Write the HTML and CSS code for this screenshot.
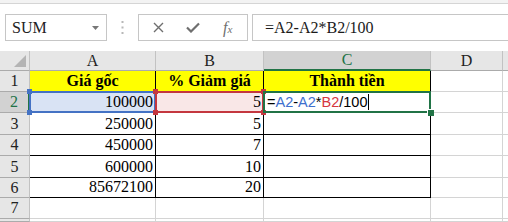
FILE: index.html
```html
<!DOCTYPE html>
<html lang="vi">
<head>
  <meta charset="UTF-8">
  <title>Bảng tính</title>
  <link rel="stylesheet" href="styles.css">
</head>
<body>

  <div class="ribbon-edge"></div>

  <!-- formula bar -->
  <div class="toolbar">
    <div class="name-box">
      <span>SUM</span>
      <svg class="drop" width="7" height="4" viewBox="0 0 7 4"><path d="M0 0h7L3.5 4z" fill="#777"/></svg>
    </div>
    <div class="grip">
      <svg width="3" height="13" viewBox="0 0 3 13"><rect x="0.5" y="0" width="2" height="2" fill="#b8b8b8"/><rect x="0.5" y="5.5" width="2" height="2" fill="#b8b8b8"/><rect x="0.5" y="11" width="2" height="2" fill="#b8b8b8"/></svg>
    </div>
    <div class="fx-box">
      <svg class="ico" width="11" height="11" viewBox="0 0 11 11"><path d="M1 1l9 9M10 1l-9 9" stroke="#6f6f6f" stroke-width="1.4" fill="none"/></svg>
      <svg class="ico" width="14" height="11" viewBox="0 0 14 11"><path d="M1 5.5l4 4L13 1.5" stroke="#6f6f6f" stroke-width="2.2" fill="none"/></svg>
      <span class="fx">f<small>x</small></span>
    </div>
    <div class="formula">=A2-A2*B2/100</div>
  </div>

  <!-- sheet -->
  <div class="sheet">
    <div class="c h corner">
      <svg width="12" height="12" viewBox="0 0 12 12"><path d="M12 0v12H0z" fill="#b4b4b4"/></svg>
    </div>
    <div class="c h">A</div>
    <div class="c h">B</div>
    <div class="c h col on">C</div>
    <div class="c h">D</div>
    <div class="c h"></div>

    <div class="c h">1</div>
    <div class="c t y">Giá gốc</div>
    <div class="c t y">% Giảm giá</div>
    <div class="c t y">Thành tiền</div>
    <div class="c"></div>
    <div class="c"></div>

    <div class="c h row on">2</div>
    <div class="c t n ref-a">100000
      <span class="ring blue"><i class="tl"></i><i class="bl"></i></span>
    </div>
    <div class="c t n ref-b">5
      <span class="ring red"><i class="tl"></i><i class="bl"></i><i class="tr"></i><i class="br"></i></span>
    </div>
    <div class="c t edit">
      <span>=<b class="ka">A2</b>-<b class="ka">A2</b>*<b class="kb">B2</b>/100</span><span class="caret"></span>
      <span class="ring green"><i class="fill"></i></span>
    </div>
    <div class="c"></div>
    <div class="c"></div>

    <div class="c h">3</div>
    <div class="c t n">250000</div>
    <div class="c t n">5</div>
    <div class="c t"></div>
    <div class="c"></div>
    <div class="c"></div>

    <div class="c h">4</div>
    <div class="c t n">450000</div>
    <div class="c t n">7</div>
    <div class="c t"></div>
    <div class="c"></div>
    <div class="c"></div>

    <div class="c h">5</div>
    <div class="c t n">600000</div>
    <div class="c t n">10</div>
    <div class="c t"></div>
    <div class="c"></div>
    <div class="c"></div>

    <div class="c h">6</div>
    <div class="c t n">85672100</div>
    <div class="c t n">20</div>
    <div class="c t"></div>
    <div class="c"></div>
    <div class="c"></div>

    <div class="c h">7</div>
    <div class="c"></div>
    <div class="c"></div>
    <div class="c"></div>
    <div class="c"></div>
    <div class="c"></div>

    <div class="c h"></div>
    <div class="c"></div>
    <div class="c"></div>
    <div class="c"></div>
    <div class="c"></div>
    <div class="c"></div>
  </div>

</body>
</html>
```

FILE: styles.css
```css
body {
  margin: 0;
  width: 508px;
  height: 222px;
  overflow: hidden;
  background: #fff;
  font-family: "Liberation Serif", serif;
  font-size: 16px;
  color: #000;
}

.ribbon-edge {
  height: 3px;
  background: #f3f3f3;
  border-bottom: 1px solid #d5d5d5;
}

.toolbar {
  height: 47px;
  box-sizing: border-box;
  padding: 10px 0 0 5px;
  display: flex;
  align-items: flex-start;
}

.name-box {
  width: 102px;
  height: 27px;
  box-sizing: border-box;
  border: 1px solid #c6c6c6;
  display: flex;
  align-items: center;
  justify-content: space-between;
  padding: 0 7px 0 6px;
  color: #222;
}

.grip {
  width: 31px;
  height: 27px;
  display: flex;
  align-items: center;
  justify-content: center;
}

.fx-box {
  width: 110px;
  height: 27px;
  box-sizing: border-box;
  border: 1px solid #c6c6c6;
  display: flex;
  align-items: center;
  padding-left: 14px;
  gap: 22px;
}

.fx {
  font-style: italic;
  color: #6f6f6f;
  font-size: 16px;
  margin-left: 1px;
}

.fx small {
  font-size: 11px;
}

.formula {
  flex: 1;
  height: 27px;
  margin-left: 4px;
  box-sizing: border-box;
  border: 1px solid #c6c6c6;
  border-right: none;
  padding-left: 12px;
  display: flex;
  align-items: center;
  color: #1a1a1a;
}

.sheet {
  display: grid;
  grid-template-columns: 30px 126px 108px 167px 72px 1fr;
  grid-template-rows: 20px 21px 21px 22px 21px 22px 20px 21px 1fr;
  height: 171px;
}

.c {
  position: relative;
  box-sizing: border-box;
  border-right: 1px solid #d4d4d4;
  border-bottom: 1px solid #d4d4d4;
  display: flex;
  align-items: flex-end;
  padding: 0 3px 1px;
  line-height: 18px;
  white-space: nowrap;
}

.h {
  background: #e6e6e6;
  border-right-color: #c2c2c2;
  border-bottom-color: #ababab;
  justify-content: center;
  align-items: center;
  padding: 0;
  color: #222;
}

.h.on {
  background: #d2d2d2;
  color: #217346;
}

.h.col.on {
  border-bottom: 2px solid #217346;
}

.h.row.on {
  border-right: 2px solid #217346;
}

.corner {
  justify-content: flex-end;
  align-items: flex-end;
  padding: 0 3px 3px 0;
}

.t {
  border-right-color: #000;
  border-bottom-color: #000;
}

.y {
  background: #ff0;
  font-weight: bold;
  justify-content: center;
}

.n {
  justify-content: flex-end;
  padding-right: 2px;
}

.ref-a {
  background: #d9e3f4;
}

.ref-b {
  background: #f9e7e7;
}

.edit {
  font-family: "Liberation Sans", sans-serif;
  font-size: 14.5px;
  padding-left: 3px;
  align-items: center;
  padding-bottom: 0;
}

.edit b {
  font-weight: normal;
}

.ka {
  color: #3e6fce;
}

.kb {
  color: #d6363f;
}

.caret {
  width: 1px;
  height: 16px;
  background: #000;
  margin-left: 1px;
}

/* selection rings drawn over the cells */
.ring {
  position: absolute;
  top: -1px;
  left: -1px;
  right: -1px;
  bottom: -1px;
  border: 2px solid;
  z-index: 1;
}

.ring i {
  position: absolute;
  width: 5px;
  height: 5px;
  background: currentColor;
}

.ring .tl { left: -4px; top: -4px; }
.ring .bl { left: -4px; bottom: -4px; }
.ring .tr { right: -4px; top: -4px; }
.ring .br { right: -4px; bottom: -4px; }

.ring.blue {
  color: #4472c4;
  border-color: #4472c4;
}

.ring.red {
  color: #c4373f;
  border-color: #c4373f;
  z-index: 2;
}

.ring.green {
  color: #217346;
  border-color: #217346;
  z-index: 3;
}

.ring .fill {
  right: -5px;
  bottom: -5px;
  width: 6px;
  height: 6px;
  border-left: 1px solid #fff;
  border-top: 1px solid #fff;
}
```
